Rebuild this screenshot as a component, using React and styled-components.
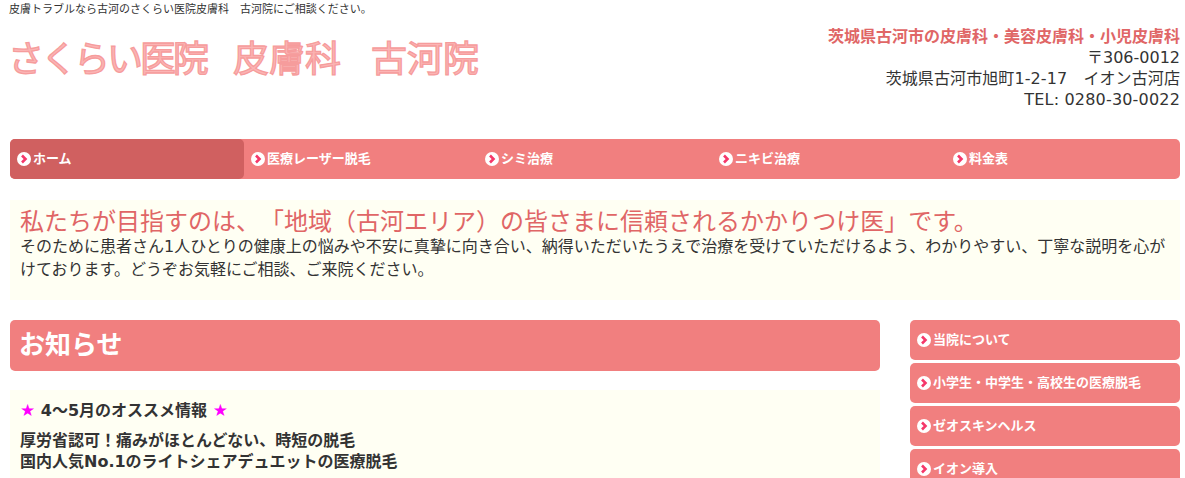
import React from 'react';
import styled, { createGlobalStyle } from 'styled-components';

const GlobalStyle = createGlobalStyle`
  html, body {
    margin: 0;
    padding: 0;
    background: #fff;
    color: #333;
    font-family: "DejaVu Sans", "Noto Sans CJK JP", sans-serif;
    font-size: 16px;
    overflow: hidden;
    text-spacing-trim: space-all;
  }
`;

const Page = styled.div`
  width: 1170px;
  height: 478px;
  padding: 0 5px 0 10px;
  overflow: hidden;
`;

const Lead = styled.p`
  margin: 0;
  padding-top: 2px;
  margin-left: -1px;
  font-size: 11px;
  line-height: 16px;
`;

const Header = styled.header`
  display: flex;
  justify-content: space-between;
  height: 121px;
`;

const Logo = styled.h1`
  margin: 0 0 0 -2px;
  padding-top: 17px;
  font-size: 36px;
  line-height: 50px;
  font-weight: 400;
  color: #fbb4b4;
  -webkit-text-stroke: 1.3px #f69c9c;
  white-space: nowrap;
`;

const LogoRun = styled.span`
  letter-spacing: ${(p) => p.$spacing}px;
`;

const Address = styled.div`
  margin-top: 8px;
  text-align: right;
  font-size: 16px;
  line-height: 21px;
`;

const AddressTitle = styled.div`
  color: #e06666;
  font-weight: 700;
`;

const AddressLine = styled.div`
  letter-spacing: ${(p) => p.$spacing || 0}px;
`;

const Nav = styled.nav`
  display: flex;
  height: 40px;
  background: #f17f7f;
  border-radius: 5px;
`;

const NavItem = styled.a`
  display: flex;
  align-items: center;
  gap: 2px;
  width: 234px;
  padding-left: 7px;
  box-sizing: border-box;
  border-radius: 5px;
  background: ${(p) => (p.$active ? '#d06060' : 'transparent')};
  color: #fff;
  font-size: 13px;
  font-weight: 700;
`;

const Label = styled.span`
  margin-top: -3px;
`;

const Icon = styled.svg`
  width: 14px;
  height: 14px;
  flex: none;
`;

const Arrow = () => (
  <Icon viewBox="0 0 14 14">
    <circle cx="7" cy="7" r="7" fill="#fff" />
    <path d="M5 3.5 L8.5 7 L5 10.5" fill="none" stroke="#f5386a" strokeWidth="2.6" />
  </Icon>
);

const Message = styled.section`
  height: 100px;
  margin-top: 21px;
  box-sizing: border-box;
  padding: 10px 10px 0;
  background: #fffff3;
`;

const MessageTitle = styled.h2`
  margin: 0;
  font-size: 24px;
  line-height: 25px;
  font-weight: 400;
  color: #e06666;
`;

const MessageText = styled.p`
  margin: 0;
  font-size: 16px;
  line-height: 23px;
`;

const Columns = styled.div`
  display: flex;
  justify-content: space-between;
  margin-top: 20px;
`;

const Main = styled.main`
  width: 870px;
`;

const Heading = styled.h2`
  margin: 0;
  height: 51px;
  padding-left: 9px;
  border-radius: 5px;
  background: #f17f7f;
  color: #fff;
  font-size: 26px;
  line-height: 50px;
  font-weight: 700;
`;

const Notice = styled.article`
  margin-top: 19px;
  padding: 10px;
  height: 100px;
  background: #fffff3;
  font-weight: 700;
`;

const NoticeTitle = styled.p`
  margin: 0 0 9px;
  line-height: 21px;
`;

const NoticeText = styled.p`
  margin: 0;
  line-height: 21px;
`;

const Star = styled.span`
  color: #ff00ff;
  font-size: 17px;
`;

const Side = styled.aside`
  display: flex;
  flex-direction: column;
  gap: 3px;
  width: 270px;
`;

const SideItem = styled.a`
  display: flex;
  align-items: center;
  gap: 2px;
  height: 40px;
  flex: none;
  padding-left: 7px;
  border-radius: 5px;
  background: #f17f7f;
  color: #fff;
  font-size: 13px;
  font-weight: 700;
`;

const navItems = ['ホーム', '医療レーザー脱毛', 'シミ治療', 'ニキビ治療', '料金表'];
const sideItems = ['当院について', '小学生・中学生・高校生の医療脱毛', 'ゼオスキンヘルス', 'イオン導入'];

export default function App() {
  return (
    <Page>
      <GlobalStyle />
      <Lead>皮膚トラブルなら古河のさくらい医院皮膚科　古河院にご相談ください。</Lead>
      <Header>
        <Logo>
          <LogoRun $spacing={-3}>さくらい医院</LogoRun>
          <LogoRun $spacing={-9}>　</LogoRun>
          皮膚科
          <LogoRun $spacing={-6}>　</LogoRun>
          古河院
        </Logo>
        <Address>
          <AddressTitle>茨城県古河市の皮膚科・美容皮膚科・小児皮膚科</AddressTitle>
          <AddressLine>〒306-0012</AddressLine>
          <AddressLine $spacing={0.1}>茨城県古河市旭町1-2-17　イオン古河店</AddressLine>
          <AddressLine $spacing={0.18}>TEL: 0280-30-0022</AddressLine>
        </Address>
      </Header>
      <Nav>
        {navItems.map((item, i) => (
          <NavItem key={item} $active={i === 0}>
            <Arrow />
            <Label>{item}</Label>
          </NavItem>
        ))}
      </Nav>
      <Message>
        <MessageTitle>私たちが目指すのは、「地域（古河エリア）の皆さまに信頼されるかかりつけ医」です。</MessageTitle>
        <MessageText>
          そのために患者さん1人ひとりの健康上の悩みや不安に真摯に向き合い、納得いただいたうえで治療を受けていただけるよう、わかりやすい、丁寧な説明を心がけております。どうぞお気軽にご相談、ご来院ください。
        </MessageText>
      </Message>
      <Columns>
        <Main>
          <Heading>お知らせ</Heading>
          <Notice>
            <NoticeTitle>
              <Star>★</Star> 4～5月のオススメ情報 <Star>★</Star>
            </NoticeTitle>
            <NoticeText>厚労省認可！痛みがほとんどない、時短の脱毛</NoticeText>
            <NoticeText>国内人気No.1のライトシェアデュエットの医療脱毛</NoticeText>
          </Notice>
        </Main>
        <Side>
          {sideItems.map((item) => (
            <SideItem key={item}>
              <Arrow />
              <Label>{item}</Label>
            </SideItem>
          ))}
        </Side>
      </Columns>
    </Page>
  );
}
